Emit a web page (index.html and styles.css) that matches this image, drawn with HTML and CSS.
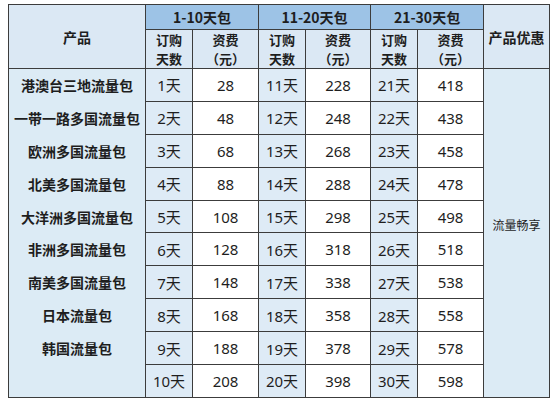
FILE: index.html
```html
<!DOCTYPE html>
<html lang="zh">
<head>
<meta charset="utf-8">
<link rel="stylesheet" href="styles.css">
</head>
<body>
<table class="price">
  <colgroup>
    <col class="c-prod"><col class="c-day"><col class="c-fee"><col class="c-day"><col class="c-fee2"><col class="c-day"><col class="c-fee"><col class="c-promo">
  </colgroup>
  <thead>
    <tr class="h1">
      <th rowspan="2" class="light">产品</th>
      <th colspan="2" class="group">1-10天包</th>
      <th colspan="2" class="group">11-20天包</th>
      <th colspan="2" class="group">21-30天包</th>
      <th rowspan="2" class="light">产品优惠</th>
    </tr>
    <tr class="h2">
      <th class="light two">订购<br>天数</th><th class="light two">资费<br>（元）</th>
      <th class="light two">订购<br>天数</th><th class="light two">资费<br>（元）</th>
      <th class="light two">订购<br>天数</th><th class="light two">资费<br>（元）</th>
    </tr>
  </thead>
  <tbody>
    <tr><td class="prod">港澳台三地流量包</td><td class="day">1天</td><td>28</td><td class="day">11天</td><td>228</td><td class="day">21天</td><td>418</td><td rowspan="10" class="promo">流量畅享</td></tr>
    <tr><td class="prod">一带一路多国流量包</td><td class="day">2天</td><td>48</td><td class="day">12天</td><td>248</td><td class="day">22天</td><td>438</td></tr>
    <tr><td class="prod">欧洲多国流量包</td><td class="day">3天</td><td>68</td><td class="day">13天</td><td>268</td><td class="day">23天</td><td>458</td></tr>
    <tr><td class="prod">北美多国流量包</td><td class="day">4天</td><td>88</td><td class="day">14天</td><td>288</td><td class="day">24天</td><td>478</td></tr>
    <tr><td class="prod">大洋洲多国流量包</td><td class="day">5天</td><td>108</td><td class="day">15天</td><td>298</td><td class="day">25天</td><td>498</td></tr>
    <tr><td class="prod">非洲多国流量包</td><td class="day">6天</td><td>128</td><td class="day">16天</td><td>318</td><td class="day">26天</td><td>518</td></tr>
    <tr><td class="prod">南美多国流量包</td><td class="day">7天</td><td>148</td><td class="day">17天</td><td>338</td><td class="day">27天</td><td>538</td></tr>
    <tr><td class="prod">日本流量包</td><td class="day">8天</td><td>168</td><td class="day">18天</td><td>358</td><td class="day">28天</td><td>558</td></tr>
    <tr><td class="prod">韩国流量包</td><td class="day">9天</td><td>188</td><td class="day">19天</td><td>378</td><td class="day">29天</td><td>578</td></tr>
    <tr><td class="prod"></td><td class="day">10天</td><td>208</td><td class="day">20天</td><td>398</td><td class="day">30天</td><td>598</td></tr>
  </tbody>
</table>
</body>
</html>
```
FILE: styles.css
```css
html, body {
  margin: 0;
  padding: 0;
  background: #ffffff;
}
body {
  padding: 4px 0 0 8px;
}
.price {
  border-collapse: collapse;
  table-layout: fixed;
  width: 541px;
  border: 1px solid #3c3c3c;
  font-family: "Noto Sans", "Noto Sans CJK SC", sans-serif;
  color: #1e1e1e;
}
.c-prod { width: 137px; }
.c-day { width: 47px; }
.c-fee { width: 66px; }
.c-fee2 { width: 65px; }
.c-promo { width: 66px; }
.price th, .price td {
  border: 1px solid #3c3c3c;
  padding: 0;
  text-align: center;
  vertical-align: middle;
}
.price th {
  font-family: "Noto Sans CJK SC", sans-serif;
  font-weight: 700;
  font-size: 14px;
  line-height: 20px;
}
.price th.two {
  line-height: 19px;
  font-size: 13px;
}
.h1 { height: 25px; }
.h2 { height: 38px; }
.price tbody tr { height: 32.9px; }
.group { background: #9dc3e6; }
.light { background: #dbe8f4; }
.price td {
  font-size: 15px;
  background: #ffffff;
}
.price td.day { background: #deebf6; }
.price td.prod {
  background: #dcebf5;
  font-family: "Noto Sans CJK SC", sans-serif;
  font-weight: 700;
  font-size: 14px;
  border-top: none;
  border-bottom: none;
}
.price td.promo {
  background: #dcebf5;
  font-family: "Noto Sans CJK SC", sans-serif;
  font-size: 12px;
  padding-bottom: 16px;
}
```
